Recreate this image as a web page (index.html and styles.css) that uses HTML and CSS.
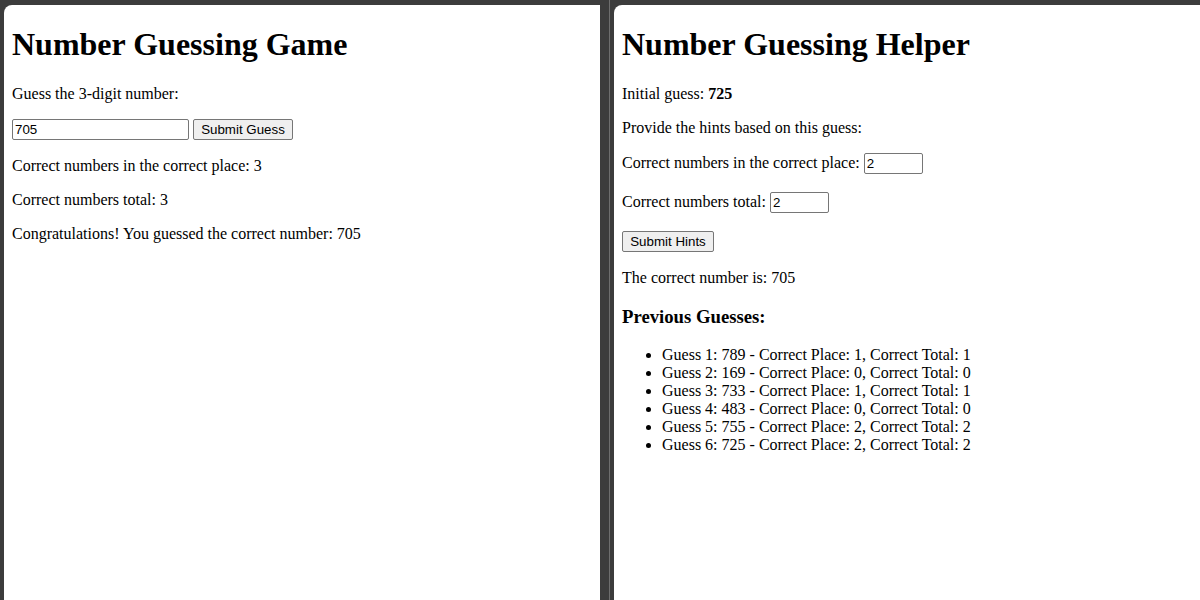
FILE: index.html
```html
<!DOCTYPE html>
<html lang="en">
<head>
<meta charset="utf-8">
<title>Number Guessing</title>
<link rel="stylesheet" href="styles.css">
</head>
<body>
<div class="desk">
  <section class="pane pane-left">
    <h1>Number Guessing Game</h1>
    <p>Guess the 3-digit number:</p>
    <div class="row">
      <input class="guess-input" type="text" value="705"> <button class="btn btn-guess">Submit Guess</button>
    </div>
    <p>Correct numbers in the correct place: 3</p>
    <p>Correct numbers total: 3</p>
    <p>Congratulations! You guessed the correct number: 705</p>
  </section>
  <div class="divider"><span class="divider-line"></span></div>
  <section class="pane pane-right">
    <h1>Number Guessing Helper</h1>
    <p>Initial guess: <strong>725</strong></p>
    <p>Provide the hints based on this guess:</p>
    <p class="field">Correct numbers in the correct place: <input class="hint-input" type="text" value="2"></p>
    <p class="field">Correct numbers total: <input class="hint-input" type="text" value="2"></p>
    <div class="row"><button class="btn btn-hints">Submit Hints</button></div>
    <p>The correct number is: 705</p>
    <h3>Previous Guesses:</h3>
    <ul class="guesses">
      <li>Guess 1: 789 - Correct Place: 1, Correct Total: 1</li>
      <li>Guess 2: 169 - Correct Place: 0, Correct Total: 0</li>
      <li>Guess 3: 733 - Correct Place: 1, Correct Total: 1</li>
      <li>Guess 4: 483 - Correct Place: 0, Correct Total: 0</li>
      <li>Guess 5: 755 - Correct Place: 2, Correct Total: 2</li>
      <li>Guess 6: 725 - Correct Place: 2, Correct Total: 2</li>
    </ul>
  </section>
</div>
</body>
</html>
```

FILE: styles.css
```css
html, body {
  margin: 0;
  padding: 0;
  height: 100%;
  background: #3c3c3c;
  overflow: hidden;
}

.desk {
  display: flex;
  height: 600px;
  padding: 5px 0 0 4px;
  box-sizing: border-box;
  font-family: "Liberation Serif", "Times New Roman", serif;
  font-size: 16px;
  color: #000;
}

.pane {
  background: #fff;
  padding: 0 8px;
  box-sizing: border-box;
  border-top-left-radius: 8px;
  overflow: hidden;
}

.pane-left {
  width: 596px;
  flex: none;
}

.pane-right {
  flex: 1;
  min-width: 0;
}

.divider {
  width: 14px;
  flex: none;
  display: flex;
  justify-content: flex-start;
  padding-left: 9px;
  box-sizing: border-box;
}

.divider-line {
  width: 1px;
  background: #6e6e6e;
  margin-top: -5px;
}

h1 {
  font-size: 32px;
  font-weight: bold;
  margin: 21.44px 0;
  white-space: nowrap;
}

h3 {
  font-size: 18.72px;
  font-weight: bold;
  margin: 18.72px 0;
}

p {
  margin: 16px 0;
  white-space: nowrap;
}

.row {
  margin: 16px 0;
  padding-bottom: 1px;
  line-height: 0;
  white-space: nowrap;
}

input, button {
  font-family: "Liberation Sans", Arial, sans-serif;
  font-size: 13.333px;
  box-sizing: border-box;
  height: 21px;
  color: #000;
}

.row input, .row button {
  line-height: normal;
  vertical-align: top;
}

.guess-input {
  width: 177px;
  padding: 1px 2px;
  border: 1px solid #767676;
  border-radius: 2px;
  margin: 0;
}

.hint-input {
  width: 59px;
  padding: 1px 2px;
  border: 1px solid #767676;
  border-radius: 2px;
  margin: 0 0 2px;
  vertical-align: baseline;
}

.btn {
  padding: 1px 6px;
  border: 1px solid #767676;
  border-radius: 2px;
  background: #efefef;
  margin: 0;
}

.btn-guess {
  width: 100px;
}

.btn-hints {
  width: 92px;
}

.guesses {
  margin: 16px 0;
  padding-left: 40px;
  list-style: disc;
}

.guesses li {
  white-space: nowrap;
}
```
